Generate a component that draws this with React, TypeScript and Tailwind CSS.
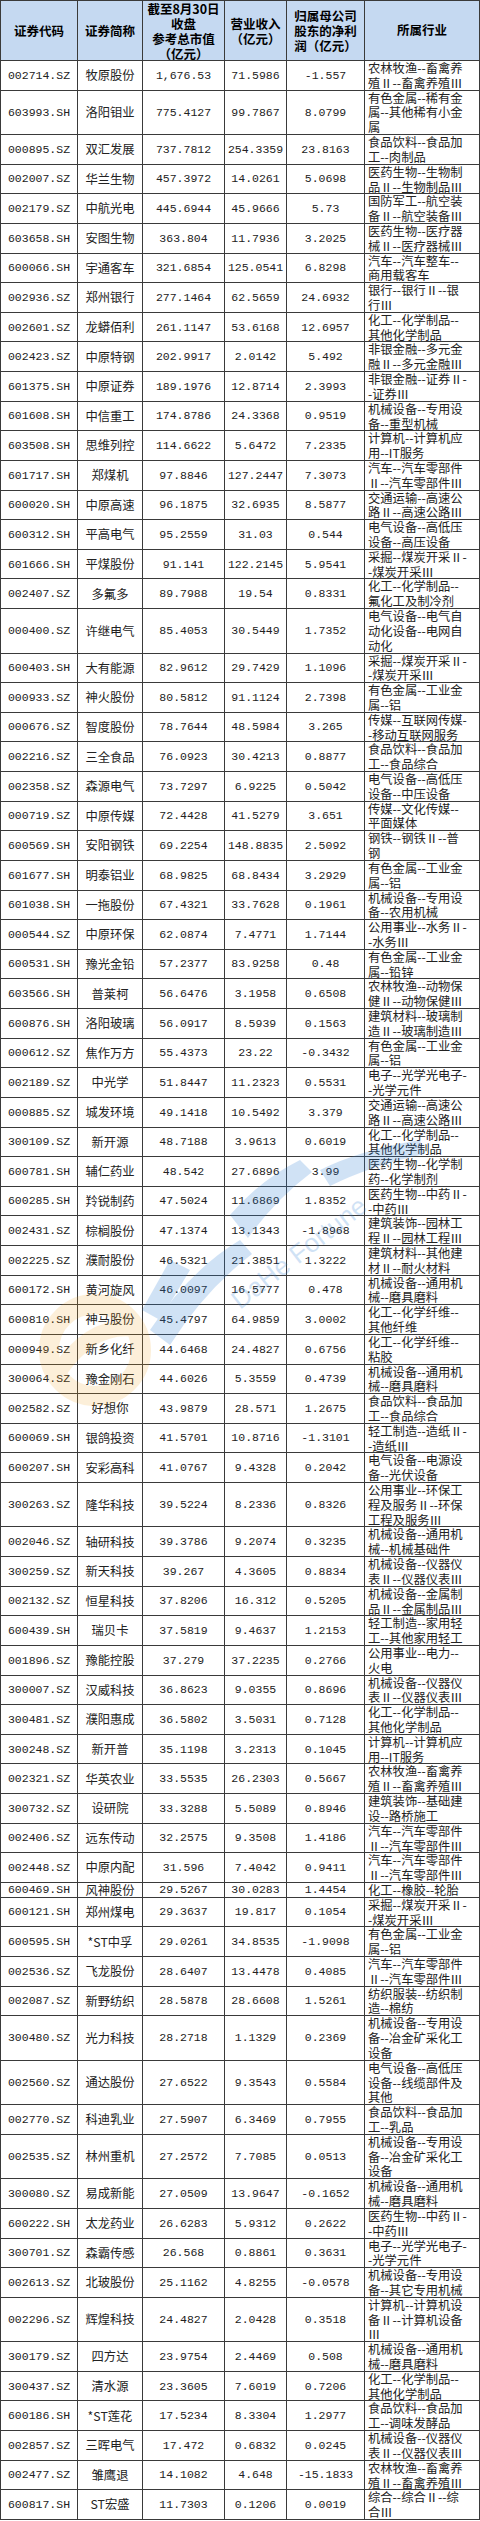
import React from 'react';

type Row = [string, string, string, string, string, string];

// industry lines are split with "|" the way the original sheet wraps them
const rows: Row[] = [
  ['002714.SZ', '牧原股份', '1,676.53', '71.5986', '-1.557', '农林牧渔--畜禽养|殖Ⅱ--畜禽养殖Ⅲ'],
  ['603993.SH', '洛阳钼业', '775.4127', '99.7867', '8.0799', '有色金属--稀有金|属--其他稀有小金|属'],
  ['000895.SZ', '双汇发展', '737.7812', '254.3359', '23.8163', '食品饮料--食品加|工--肉制品'],
  ['002007.SZ', '华兰生物', '457.3972', '14.0261', '5.0698', '医药生物--生物制|品Ⅱ--生物制品Ⅲ'],
  ['002179.SZ', '中航光电', '445.6944', '45.9666', '5.73', '国防军工--航空装|备Ⅱ--航空装备Ⅲ'],
  ['603658.SH', '安图生物', '363.804', '11.7936', '3.2025', '医药生物--医疗器|械Ⅱ--医疗器械Ⅲ'],
  ['600066.SH', '宇通客车', '321.6854', '125.0541', '6.8298', '汽车--汽车整车--|商用载客车'],
  ['002936.SZ', '郑州银行', '277.1464', '62.5659', '24.6932', '银行--银行Ⅱ--银|行Ⅲ'],
  ['002601.SZ', '龙蟒佰利', '261.1147', '53.6168', '12.6957', '化工--化学制品--|其他化学制品'],
  ['002423.SZ', '中原特钢', '202.9917', '2.0142', '5.492', '非银金融--多元金|融Ⅱ--多元金融Ⅲ'],
  ['601375.SH', '中原证券', '189.1976', '12.8714', '2.3993', '非银金融--证券Ⅱ-|-证券Ⅲ'],
  ['601608.SH', '中信重工', '174.8786', '24.3368', '0.9519', '机械设备--专用设|备--重型机械'],
  ['603508.SH', '思维列控', '114.6622', '5.6472', '7.2335', '计算机--计算机应|用--IT服务'],
  ['601717.SH', '郑煤机', '97.8846', '127.2447', '7.3073', '汽车--汽车零部件|Ⅱ--汽车零部件Ⅲ'],
  ['600020.SH', '中原高速', '96.1875', '32.6935', '8.5877', '交通运输--高速公|路Ⅱ--高速公路Ⅲ'],
  ['600312.SH', '平高电气', '95.2559', '31.03', '0.544', '电气设备--高低压|设备--高压设备'],
  ['601666.SH', '平煤股份', '91.141', '122.2145', '5.9541', '采掘--煤炭开采Ⅱ-|-煤炭开采Ⅲ'],
  ['002407.SZ', '多氟多', '89.7988', '19.54', '0.8331', '化工--化学制品--|氟化工及制冷剂'],
  ['000400.SZ', '许继电气', '85.4053', '30.5449', '1.7352', '电气设备--电气自|动化设备--电网自|动化'],
  ['600403.SH', '大有能源', '82.9612', '29.7429', '1.1096', '采掘--煤炭开采Ⅱ-|-煤炭开采Ⅲ'],
  ['000933.SZ', '神火股份', '80.5812', '91.1124', '2.7398', '有色金属--工业金|属--铝'],
  ['000676.SZ', '智度股份', '78.7644', '48.5984', '3.265', '传媒--互联网传媒-|-移动互联网服务'],
  ['002216.SZ', '三全食品', '76.0923', '30.4213', '0.8877', '食品饮料--食品加|工--食品综合'],
  ['002358.SZ', '森源电气', '73.7297', '6.9225', '0.5042', '电气设备--高低压|设备--中压设备'],
  ['000719.SZ', '中原传媒', '72.4428', '41.5279', '3.651', '传媒--文化传媒--|平面媒体'],
  ['600569.SH', '安阳钢铁', '69.2254', '148.8835', '2.5092', '钢铁--钢铁Ⅱ--普|钢'],
  ['601677.SH', '明泰铝业', '68.9825', '68.8434', '3.2929', '有色金属--工业金|属--铝'],
  ['601038.SH', '一拖股份', '67.4321', '33.7628', '0.1961', '机械设备--专用设|备--农用机械'],
  ['000544.SZ', '中原环保', '62.0874', '7.4771', '1.7144', '公用事业--水务Ⅱ-|-水务Ⅲ'],
  ['600531.SH', '豫光金铅', '57.2377', '83.9258', '0.48', '有色金属--工业金|属--铅锌'],
  ['603566.SH', '普莱柯', '56.6476', '3.1958', '0.6508', '农林牧渔--动物保|健Ⅱ--动物保健Ⅲ'],
  ['600876.SH', '洛阳玻璃', '56.0917', '8.5939', '0.1563', '建筑材料--玻璃制|造Ⅱ--玻璃制造Ⅲ'],
  ['000612.SZ', '焦作万方', '55.4373', '23.22', '-0.3432', '有色金属--工业金|属--铝'],
  ['002189.SZ', '中光学', '51.8447', '11.2323', '0.5531', '电子--光学光电子-|-光学元件'],
  ['000885.SZ', '城发环境', '49.1418', '10.5492', '3.379', '交通运输--高速公|路Ⅱ--高速公路Ⅲ'],
  ['300109.SZ', '新开源', '48.7188', '3.9613', '0.6019', '化工--化学制品--|其他化学制品'],
  ['600781.SH', '辅仁药业', '48.542', '27.6896', '3.99', '医药生物--化学制|药--化学制剂'],
  ['600285.SH', '羚锐制药', '47.5024', '11.6869', '1.8352', '医药生物--中药Ⅱ-|-中药Ⅲ'],
  ['002431.SZ', '棕榈股份', '47.1374', '13.1343', '-1.8968', '建筑装饰--园林工|程Ⅱ--园林工程Ⅲ'],
  ['002225.SZ', '濮耐股份', '46.5321', '21.3851', '1.3222', '建筑材料--其他建|材Ⅱ--耐火材料'],
  ['600172.SH', '黄河旋风', '46.0097', '16.5777', '0.478', '机械设备--通用机|械--磨具磨料'],
  ['600810.SH', '神马股份', '45.4797', '64.9859', '3.0002', '化工--化学纤维--|其他纤维'],
  ['000949.SZ', '新乡化纤', '44.6468', '24.4827', '0.6756', '化工--化学纤维--|粘胶'],
  ['300064.SZ', '豫金刚石', '44.6026', '5.3559', '0.4739', '机械设备--通用机|械--磨具磨料'],
  ['002582.SZ', '好想你', '43.9879', '28.571', '1.2675', '食品饮料--食品加|工--食品综合'],
  ['600069.SH', '银鸽投资', '41.5701', '10.8716', '-1.3101', '轻工制造--造纸Ⅱ-|-造纸Ⅲ'],
  ['600207.SH', '安彩高科', '41.0767', '9.4328', '0.2042', '电气设备--电源设|备--光伏设备'],
  ['300263.SZ', '隆华科技', '39.5224', '8.2336', '0.8326', '公用事业--环保工|程及服务Ⅱ--环保|工程及服务Ⅲ'],
  ['002046.SZ', '轴研科技', '39.3786', '9.2074', '0.3235', '机械设备--通用机|械--机械基础件'],
  ['300259.SZ', '新天科技', '39.267', '4.3605', '0.8834', '机械设备--仪器仪|表Ⅱ--仪器仪表Ⅲ'],
  ['002132.SZ', '恒星科技', '37.8206', '16.312', '0.5205', '机械设备--金属制|品Ⅱ--金属制品Ⅲ'],
  ['600439.SH', '瑞贝卡', '37.5819', '9.4637', '1.2153', '轻工制造--家用轻|工--其他家用轻工'],
  ['001896.SZ', '豫能控股', '37.279', '37.2235', '0.2766', '公用事业--电力--|火电'],
  ['300007.SZ', '汉威科技', '36.8623', '9.0355', '0.8696', '机械设备--仪器仪|表Ⅱ--仪器仪表Ⅲ'],
  ['300481.SZ', '濮阳惠成', '36.5802', '3.5031', '0.7128', '化工--化学制品--|其他化学制品'],
  ['300248.SZ', '新开普', '35.1198', '3.2313', '0.1045', '计算机--计算机应|用--IT服务'],
  ['002321.SZ', '华英农业', '33.5535', '26.2303', '0.5667', '农林牧渔--畜禽养|殖Ⅱ--畜禽养殖Ⅲ'],
  ['300732.SZ', '设研院', '33.3288', '5.5089', '0.8946', '建筑装饰--基础建|设--路桥施工'],
  ['002406.SZ', '远东传动', '32.2575', '9.3508', '1.4186', '汽车--汽车零部件|Ⅱ--汽车零部件Ⅲ'],
  ['002448.SZ', '中原内配', '31.596', '7.4042', '0.9411', '汽车--汽车零部件|Ⅱ--汽车零部件Ⅲ'],
  ['600469.SH', '风神股份', '29.5267', '30.0283', '1.4454', '化工--橡胶--轮胎'],
  ['600121.SH', '郑州煤电', '29.3637', '19.817', '0.1054', '采掘--煤炭开采Ⅱ-|-煤炭开采Ⅲ'],
  ['600595.SH', '*ST中孚', '29.0261', '34.8535', '-1.9098', '有色金属--工业金|属--铝'],
  ['002536.SZ', '飞龙股份', '28.6407', '13.4478', '0.4085', '汽车--汽车零部件|Ⅱ--汽车零部件Ⅲ'],
  ['002087.SZ', '新野纺织', '28.5878', '28.6608', '1.5261', '纺织服装--纺织制|造--棉纺'],
  ['300480.SZ', '光力科技', '28.2718', '1.1329', '0.2369', '机械设备--专用设|备--冶金矿采化工|设备'],
  ['002560.SZ', '通达股份', '27.6522', '9.3543', '0.5584', '电气设备--高低压|设备--线缆部件及|其他'],
  ['002770.SZ', '科迪乳业', '27.5907', '6.3469', '0.7955', '食品饮料--食品加|工--乳品'],
  ['002535.SZ', '林州重机', '27.2572', '7.7085', '0.0513', '机械设备--专用设|备--冶金矿采化工|设备'],
  ['300080.SZ', '易成新能', '27.0509', '13.9647', '-0.1652', '机械设备--通用机|械--磨具磨料'],
  ['600222.SH', '太龙药业', '26.6283', '5.9312', '0.2622', '医药生物--中药Ⅱ-|-中药Ⅲ'],
  ['300701.SZ', '森霸传感', '26.568', '0.8861', '0.3631', '电子--光学光电子-|-光学元件'],
  ['002613.SZ', '北玻股份', '25.1162', '4.8255', '-0.0578', '机械设备--专用设|备--其它专用机械'],
  ['002296.SZ', '辉煌科技', '24.4827', '2.0428', '0.3518', '计算机--计算机设|备Ⅱ--计算机设备|Ⅲ'],
  ['300179.SZ', '四方达', '23.9754', '2.4469', '0.508', '机械设备--通用机|械--磨具磨料'],
  ['300437.SZ', '清水源', '23.3605', '7.6019', '0.7206', '化工--化学制品--|其他化学制品'],
  ['600186.SH', '*ST莲花', '17.5234', '8.3304', '1.2977', '食品饮料--食品加|工--调味发酵品'],
  ['002857.SZ', '三晖电气', '17.472', '0.6832', '0.0245', '机械设备--仪器仪|表Ⅱ--仪器仪表Ⅲ'],
  ['002477.SZ', '雏鹰退', '14.1082', '4.648', '-15.1833', '农林牧渔--畜禽养|殖Ⅱ--畜禽养殖Ⅲ'],
  ['600817.SH', 'ST宏盛', '11.7303', '0.1206', '0.0019', '综合--综合Ⅱ--综|合Ⅲ'],
];

const cell = 'flex items-center justify-center border-r border-[#3a3a3a] shrink-0';
const num = "font-['Liberation_Mono',monospace] text-[11.5px] text-[#222]";
const cjk = "font-['Noto_Sans_CJK_SC',sans-serif] text-[12.3px] text-[#222]";

function HeaderCell({ w, lines }: { w: string; lines: string[] }) {
  return (
    <div className={`${cell} ${w} flex-col text-center leading-[15px]`}>
      {lines.map(l => <div key={l} className="whitespace-nowrap">{l}</div>)}
    </div>
  );
}

function Watermark() {
  return (
    <svg className="absolute left-0 top-[1120px] pointer-events-none" width="480" height="320" viewBox="0 0 480 320">
      <g opacity="0.16">
        <circle cx="95" cy="230" r="46" fill="none" stroke="#f2a21a" strokeWidth="20" />
        <path d="M60 250 Q95 200 140 210" stroke="#f2a21a" strokeWidth="16" fill="none" />
      </g>
      <g opacity="0.22" fill="#2f7fd6">
        <path d="M230 95 Q260 60 300 40 L312 52 Q275 80 248 118 Z" />
        <path d="M150 210 Q190 150 240 120 L252 134 Q205 170 170 225 Z" />
        <path d="M320 50 Q360 30 420 20 L424 34 Q370 46 330 66 Z" />
        <path d="M170 140 L190 150 L160 200 L142 190 Z" />
      </g>
      <text x="240" y="190" transform="rotate(-38 240 190)" fill="#2f7fd6" opacity="0.22"
        className="font-['Liberation_Sans',sans-serif]" fontSize="26">DaHe Fortune</text>
    </svg>
  );
}

export default function App() {
  return (
    <div className="relative w-[480px] bg-white">
      <div className="border-l border-t border-[#3a3a3a]">
        <div className={`flex h-[60px] border-b border-[#3a3a3a] bg-[#c5d9f1] font-bold text-black font-['Noto_Sans_CJK_SC',sans-serif] text-[12.5px]`}>
          <HeaderCell w="w-[77px]" lines={['证券代码']} />
          <HeaderCell w="w-[65px]" lines={['证券简称']} />
          <HeaderCell w="w-[82px]" lines={['截至8月30日', '收盘', '参考总市值', '（亿元）']} />
          <HeaderCell w="w-[62px]" lines={['营业收入', '（亿元）']} />
          <HeaderCell w="w-[78px]" lines={['归属母公司', '股东的净利', '润（亿元）']} />
          <div className="flex flex-1 items-center justify-center border-r border-[#3a3a3a]">所属行业</div>
        </div>
        {rows.map(r => {
          const lines = r[5].split('|');
          const h = lines.length === 1 ? 'h-[14.82px]' : lines.length === 2 ? 'h-[29.64px]' : 'h-[44.46px]';
          return (
            <div key={r[0]} className={`flex ${h} border-b border-[#3a3a3a]`}>
              <div className={`${cell} w-[77px] ${num}`}>{r[0]}</div>
              <div className={`${cell} w-[65px] ${cjk} whitespace-nowrap`}>{r[1]}</div>
              <div className={`${cell} w-[82px] ${num}`}>{r[2]}</div>
              <div className={`${cell} w-[62px] ${num}`}>{r[3]}</div>
              <div className={`${cell} w-[78px] ${num}`}>{r[4]}</div>
              <div className={`flex-1 min-w-0 border-r border-[#3a3a3a] px-[3px] leading-[14.8px] ${cjk}`}>
                {lines.map((l, i) => <div key={i} className="whitespace-nowrap">{l}</div>)}
              </div>
            </div>
          );
        })}
      </div>
      <Watermark />
    </div>
  );
}
